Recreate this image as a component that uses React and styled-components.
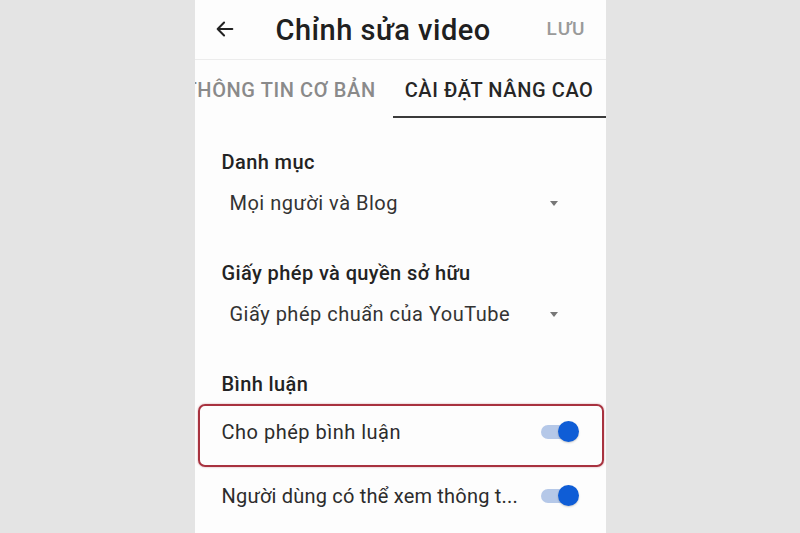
import React from "react";
import styled, { createGlobalStyle } from "styled-components";

const GlobalStyle = createGlobalStyle`
  html, body {
    margin: 0;
    padding: 0;
    background: #e4e4e4;
    font-family: Roboto, "Noto Sans", sans-serif;
  }
`;

const Page = styled.div`
  width: 800px;
  height: 533px;
  display: flex;
  justify-content: center;
  overflow: hidden;
`;

const Phone = styled.div`
  width: 411px;
  height: 533px;
  background: #fdfdfd;
  display: flex;
  flex-direction: column;
`;

const Header = styled.div`
  height: 60px;
  display: flex;
  align-items: center;
  padding: 0 20px 0 19px;
  border-bottom: 1px solid #ececec;
  box-sizing: border-box;
`;

const BackIcon = styled.svg`
  width: 22px;
  height: 22px;
  margin-top: -2px;
`;

const Title = styled.h1`
  margin: 0 0 0 40px;
  flex: 1;
  font-size: 29px;
  line-height: 36px;
  font-weight: 500;
  color: #202020;
  letter-spacing: 0.5px;
`;

const SaveButton = styled.span`
  font-size: 19px;
  font-weight: 500;
  color: #9a9a9a;
  letter-spacing: 1px;
  margin-top: -2px;
`;

const Tabs = styled.div`
  height: 58px;
  display: flex;
  justify-content: flex-end;
  align-items: stretch;
  overflow: hidden;
  gap: 5px;
`;

const Tab = styled.div`
  flex-shrink: 0;
  display: flex;
  align-items: center;
  padding: 4px 12px 0;
  font-size: 20px;
  font-weight: 500;
  letter-spacing: 0.6px;
  white-space: nowrap;
  color: ${(p) => (p.$active ? "#262626" : "#8a8a8a")};
  border-bottom: 2px solid ${(p) => (p.$active ? "#3b3b3b" : "transparent")};
  box-sizing: border-box;
`;

const Content = styled.div`
  padding: 32px 28px 0 27px;
  display: flex;
  flex-direction: column;
`;

const Section = styled.div`
  display: flex;
  flex-direction: column;
  gap: 17px;
  margin-bottom: 46px;
`;

const Label = styled.div`
  font-size: 20px;
  line-height: 24px;
  font-weight: 500;
  letter-spacing: 0.4px;
  color: #232323;
`;

const SelectRow = styled.div`
  display: flex;
  align-items: center;
  justify-content: space-between;
  padding: 0 20px 0 8px;
  font-size: 20px;
  line-height: 24px;
  letter-spacing: 0.5px;
  color: #333;
`;

const Caret = styled.span`
  width: 0;
  height: 0;
  border-left: 4px solid transparent;
  border-right: 4px solid transparent;
  border-top: 5px solid #777;
`;

const CommentSection = styled.div`
  display: flex;
  flex-direction: column;
`;

const SwitchRow = styled.div`
  display: flex;
  align-items: center;
  justify-content: space-between;
  font-size: 20px;
  letter-spacing: ${(p) => (p.$highlight ? "0.5px" : "0.2px")};
  color: #2c2c2c;
  height: ${(p) => (p.$highlight ? "52px" : "58px")};
  margin: ${(p) => (p.$highlight ? "8px -26px 0 -24px" : "0")};
  padding: ${(p) => (p.$highlight ? "0 24px 7px 22px" : "0")};
  border: ${(p) => (p.$highlight ? "2px solid #a8323f" : "none")};
  border-radius: 7px;
  box-shadow: ${(p) => (p.$highlight ? "0 0 2px rgba(168, 50, 63, 0.5)" : "none")};
  box-sizing: content-box;
`;

const SwitchText = styled.span`
  white-space: nowrap;
`;

const Switch = styled.span`
  position: relative;
  width: 37px;
  height: 14px;
  border-radius: 7px;
  background: #b5c8e8;
  flex-shrink: 0;
`;

const Thumb = styled.span`
  position: absolute;
  right: -1px;
  top: -4px;
  width: 21px;
  height: 21px;
  border-radius: 50%;
  background: #0f5dd6;
  box-shadow: 0 1px 2px rgba(0, 0, 0, 0.2);
`;

function Toggle() {
  return (
    <Switch>
      <Thumb />
    </Switch>
  );
}

export default function App() {
  return (
    <Page>
      <GlobalStyle />
      <Phone>
        <Header>
          <BackIcon viewBox="0 0 24 24" fill="none" stroke="#222" strokeWidth="2.2" strokeLinecap="round" strokeLinejoin="round">
            <path d="M20 12H4M11 5l-7 7 7 7" />
          </BackIcon>
          <Title>Chỉnh sửa video</Title>
          <SaveButton>LƯU</SaveButton>
        </Header>
        <Tabs>
          <Tab>THÔNG TIN CƠ BẢN</Tab>
          <Tab $active>CÀI ĐẶT NÂNG CAO</Tab>
        </Tabs>
        <Content>
          <Section>
            <Label>Danh mục</Label>
            <SelectRow>
              Mọi người và Blog
              <Caret />
            </SelectRow>
          </Section>
          <Section>
            <Label>Giấy phép và quyền sở hữu</Label>
            <SelectRow>
              Giấy phép chuẩn của YouTube
              <Caret />
            </SelectRow>
          </Section>
          <CommentSection>
            <Label>Bình luận</Label>
            <SwitchRow $highlight>
              <SwitchText>Cho phép bình luận</SwitchText>
              <Toggle />
            </SwitchRow>
            <SwitchRow>
              <SwitchText>Người dùng có thể xem thông t...</SwitchText>
              <Toggle />
            </SwitchRow>
          </CommentSection>
        </Content>
      </Phone>
    </Page>
  );
}
